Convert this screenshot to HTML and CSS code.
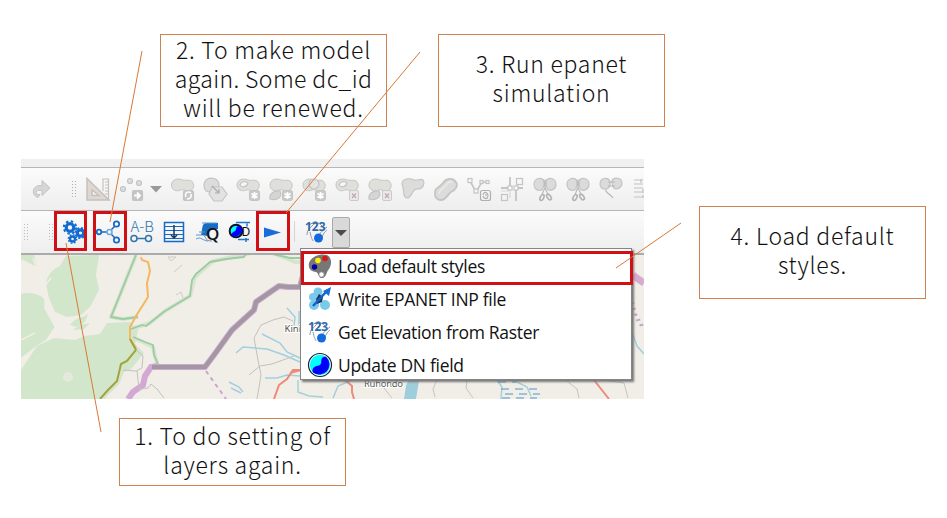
FILE: index.html
```html
<!DOCTYPE html>
<html lang="en">
<head>
<meta charset="utf-8">
<title>Toolbar guide</title>
<link rel="stylesheet" href="styles.css">
</head>
<body>
<main class="slide">
  <section class="app">
    <div class="strip"></div>
    <div class="toolbar editing">
      <svg class="glyphs" viewBox="21 168 623 42" fill="none" stroke="#c4c4c4" stroke-width="1.2">
        <defs>
          <g id="blob" fill="#dfdfdc" stroke="#c6c6c3" stroke-width="1"><path d="M1 6C1 0 8-1 12 1c4 1 8-1 10 2 3 4 0 9-4 9-4 0-5-2-8-1-4 2-9 0-9-5z"/></g>
          <g id="badge"><rect x="0" y="0" width="10" height="10" rx="2" fill="#c9c9c6" stroke="#c3c3c0" stroke-width="1"/></g>
          <g id="star"><use href="#badge"/><path d="M5 1.500v7M2 3l6 4M8 3L2 7" stroke="#fff" stroke-width="1.600"/></g>
          <g id="cross"><rect width="9" height="10" rx="1.500" fill="#eee6e8" stroke="#cfc8ca" stroke-width="1"/><path d="M2.500 3l4 4.500M6.500 3l-4 4.500" stroke="#b4b0b1" stroke-width="1.200"/></g>
          <g id="snip"><path d="M0 6C0-1 9-2 10 3c0 4-1 9-4 9S0 10 0 6zM12 3c1-5 10-4 10 3 0 5-6 7-8 5-2-2-2-5-2-8z" fill="#dadcdc"/><path d="M10 1l1 8 3 7M12 1l-1 8-3 7" stroke="#bbb"/><ellipse cx="8" cy="19" rx="1.700" ry="3.200" transform="rotate(28 8 19)" stroke="#b2b2b2" stroke-width="1.600"/><ellipse cx="15" cy="18.500" rx="1.700" ry="3.200" transform="rotate(-35 15 18.500)" stroke="#b2b2b2" stroke-width="1.600"/></g>
        </defs>
        <path d="M38 197.500c-7-2-6-12 2-12h2v-5l8 7.500-8 7.500v-5c-5-1-7 1-5 4h3z" fill="#d6d6d6" stroke="#c4c4c4" stroke-width="1"/>
        <path d="M72.500 181v16M75.500 181v16" stroke="#b0b0b0" stroke-width="1" stroke-dasharray="1 2"/>
        <path d="M87 178.500V200h22zM92 190v5.500h7z" fill="#ddd8d3" fill-rule="evenodd" stroke="#c6c0bb" stroke-width="1.500"/>
        <path d="M102.500 179h6v20.500" stroke="#c6c0bb"/><path d="M103 179v12M108 182h-3m3 3h-3m3 3h-3m3 3h-3m3 3h-3"/>
        <g fill="#ddd"><circle cx="123" cy="189" r="2.500"/><circle cx="130" cy="181" r="2.500"/><circle cx="139" cy="183" r="2.500"/></g>
        <rect x="132.500" y="190.500" width="10" height="10" rx="1.500" fill="#c5c5c5"/><path d="M134 195.500h6m-3-3l3 3-3 3" stroke="#fff" stroke-width="1.800"/>
        <path d="M150 186h12l-6 6.500z" fill="#999" stroke="none"/>
        <use href="#blob" x="170.500" y="179"/><rect x="183.500" y="190.500" width="10" height="10" rx="2" fill="#c8c8c8"/><path d="M186 197c-2-5 3-6 5-4M191 194c1 4-2 5-4 5" stroke="#fff" stroke-width="1.500"/>
        <path d="M204 185c0-9 14-9 15-1 0 6-5 9-9 8-4 0-6-3-6-7z" fill="#dcdcdc"/><path d="M212 187h10l5 7-5 7h-8l-5-7z" fill="#e2e2e2"/><path d="M212 186l7 7m0-4v4h-4" stroke="#aaa"/>
        <use href="#blob" x="236" y="179"/><path d="M240 185c1-4 6-4 8-2-1 4-6 5-8 2z" fill="#f7f7f7"/><use href="#star" x="249.500" y="190.500"/>
        <use href="#blob" x="269" y="179"/><path d="M270 199c-1-5 4-9 10-8 3 6-3 10-10 8z" fill="#d5d5d3"/><use href="#star" x="282.500" y="190.500"/>
        <use href="#blob" x="302" y="179"/><circle cx="314" cy="184" r="5" fill="#e4e4e1"/><use href="#star" x="315.500" y="190.500"/>
        <use href="#blob" x="335" y="179"/><path d="M339 185c1-4 6-4 8-2-1 4-6 5-8 2z" fill="#f7f7f7"/><use href="#cross" x="349.500" y="190.500"/>
        <use href="#blob" x="368" y="179"/><path d="M369 199c-1-5 4-9 10-8 3 6-3 10-10 8z" fill="#d5d5d3"/><use href="#cross" x="382.500" y="190.500"/>
        <path d="M402 184c0-6 8-6 12-4 4 1 6-2 9 0 2 3 0 9-5 9-6-1-6 9-11 9-5-1-2-8-5-14z" fill="#dcdcda"/>
        <path d="M435 194c-1-6 4-6 8-11 3-5 10-5 12-2 4 4 1 9-4 11-3 2-5 8-10 8-4 0-6-3-6-6z" fill="#dcdcda" stroke-width="1.800"/><path d="M439 194c0-5 4-4 8-10 2-3 4-3 5-1" stroke="#efefea"/>
        <path d="M470 181l6 11 6-10h6" stroke-width="1.600"/><g fill="#f7f7f7"><rect x="468" y="178.500" width="4" height="4"/><rect x="474" y="189" width="4" height="4"/><rect x="480" y="180.500" width="3" height="3"/><rect x="486" y="180.500" width="3" height="3"/></g><rect x="480.500" y="190.500" width="10" height="10" rx="2" stroke="#b0b0b0"/><path d="M483 195c1-4 4-3 5 0h-3m3 1c-1 4-4 3-5 0" stroke="#b0b0b0"/>
        <path d="M510 177v10M516 190v11M501 188h8M516 188h7" stroke-width="1.800"/><path d="M510 190v8M501 191h8" stroke="#d8d8d8"/><rect x="516.500" y="178.500" width="6" height="6"/><rect x="501.500" y="194.500" width="6" height="6"/><g fill="#fff"><rect x="508" y="186" width="4" height="4"/><rect x="514" y="186" width="4" height="4"/></g>
        <use href="#snip" x="534" y="178.500"/><use href="#snip" x="567" y="178.500"/>
        <path d="M600 184c0-7 9-7 10-2 1 5-3 8-6 7-2 0-4-2-4-5zM612 181c1-4 10-4 10 2 0 5-6 7-8 5-2-2-2-4-2-7z" fill="#dadcdc"/><path d="M608 182h7m-7 4h7M606 190c-1 3 4 3 7 8" stroke="#b5b5b5"/>
        <path d="M634 180h9m-9 4h9m-9 4h9m-9 4h9m-9 5h9M641 179v4m2 6v4m0 2v3" stroke="#c1c1c1"/>
      </svg>
    </div>
    <div class="toolbar epanet">
      <svg class="glyphs" viewBox="21 211 623 42" fill="none" stroke="#1769c5" stroke-width="1.500">
        <g stroke="#bcbcbc" stroke-width="1" stroke-dasharray="1 2"><path d="M24.500 224v17M27.500 224v17M49.500 224v17M52.500 224v17"/></g>
        <g stroke="#126bd0"><g stroke-width="3.200"><circle cx="70" cy="227.500" r="3.800"/><circle cx="80.500" cy="233" r="3.200"/></g><circle cx="72.500" cy="239" r="2.500" stroke-width="2.400"/><circle cx="70" cy="227.500" r="6.200" stroke-width="2" stroke-dasharray="2.430 2.440"/><circle cx="80.500" cy="233" r="5.200" stroke-width="1.600" stroke-dasharray="2.040 2.040"/><circle cx="72.500" cy="239" r="4.200" stroke-width="1.400" stroke-dasharray="1.650 1.650"/></g>
        <path d="M101 232h6M111 230l4-4M111 234l4 4"/><g stroke-width="1.700"><circle cx="99" cy="232" r="2.300"/><circle cx="109.500" cy="232" r="2.500" stroke="#70acd9"/><circle cx="116.500" cy="224" r="2.700"/><circle cx="116.500" cy="240" r="2.700"/></g>
        <text class="ab" x="130.500" y="232">A-B</text><path d="M137 238.500h9" stroke="#2d75ae"/><g stroke="#2d75ae"><circle cx="134" cy="238.500" r="3"/><circle cx="148.500" cy="238.500" r="3"/></g>
        <path d="M164.500 222.500h19v19h-19z"/><path d="M165 226.500h18m-18 4h18m-18 4h18m-18 4h18" stroke-width="1"/><path d="M174 225v13m-3-3l3 3 3-3" stroke="#173b60"/>
        <path d="M201 235c2-6 0-12 6-12h11v6h-8c-2 0 0 4-3 7z" fill="#176cc5" stroke="none"/><path d="M202 223h15M196 235h6M199 232h6M204 236c3 1 0 5 8 5M196 239c5-3 7 2 12 2" stroke="#6196c9" stroke-width="1"/><text class="q" x="206" y="240">Q</text>
        <path d="M236 222.500h14m-3 1v3M238 239.500h11M246 238v4" stroke="#1e79c9"/><circle cx="236" cy="231" r="6.300" fill="#0ff" stroke="#071220" stroke-width="2"/><path d="M239 226c-4 0-2 4-4 5-3 1-4 3-3 5 5 2 10-2 10-6 0-2-1-4-3-4z" fill="#00f" stroke="none"/><text class="d" x="241.500" y="236">D</text>
        <path d="M264 227.500l17 5-17 5z" fill="#176cda" stroke="none"/>
        <path d="M294.500 221v21" stroke="#d4d4d4" stroke-width="1"/>
        <g id="elevation"><path d="M307 235c0-5 3-7 5-9 4-5 8-3 10 0M309 225l5-3c3-2 5 2 1 5M310 232c1 5 2 7 3 9M318 236c4-5 5-6 9-9M322 237c2-5 4-6 5-7" stroke="#8894a1" stroke-width="1"/><text class="number" x="305" y="231">123</text><circle cx="318.500" cy="238" r="4.500" fill="#126bdd" stroke="none"/></g>
      </svg>
      <button class="drop" aria-label="Show menu"><span></span></button>
    </div>
    <div class="map">
      <svg viewBox="21 255 623 144" fill="none">
        <g fill="#d1e6ca"><path d="M46 284c1-9 7-15 14-18l6-10 33-1-3 20 3 15-9 17-9 8-14 2-12-5-6-14z"/><path d="M21 294c7-2 17-1 22 4 4 4-2 10 4 14l8 14-9 14-7 4-18 14zM21 255h13l3 12-4-2-12-6z"/><path d="M21 370l16-24 17-8 21 2 10-4 15-2 7-11 23-1 8 8-3 14 9 9-13 16-7 3-5 12-10 10-8 9H21z"/><path d="M70 325c8-10 15-6 19-13l-4 10-9 5zm3 5l7-5 10-2-6 6z"/></g>
        <g stroke="#f1eee8" stroke-width="1.500"><path d="M21 276l11-6 7 8 5 9 7-9M33 258l5 13 9-12M47 312l9 16 12 11M21 340l14-7"/></g>
        <circle cx="68" cy="377" r="5" fill="#e3eadb"/>
        <g stroke="#d8e4cf" stroke-width="4" stroke-linejoin="round"><path d="M136 255l-25 62 12 2 15-2m-7 12l19-6 15-12 25-15 5-19 18-16 20-4 18-4 22 0 22 9h22M131 337l12 5 10 5 4 17"/></g>
        <g stroke="#9bcca2" stroke-width="1.800" stroke-linejoin="round"><path d="M136 255l-25 62 12 2 15-2m-7 12l11-4 4 1 10-8 9-7 25-15 2-16 4-6 14-12 16-3 18-2 3-5 21 1 22 5h22M133 337l12 5 8 3 1 10 4 9-4 4"/></g>
        <path d="M141 257l1 3 6 2 2 9-3 12 1 14-12 19-6 11v12l6 9" stroke="#f3b861" stroke-width="2"/><path d="M130 339l6 11-9 11-6 3-4 17-9 9-8 9" stroke="#a3a43c" stroke-width="2"/>
        <path d="M128 399l5-7 10-7 2-9 6-9 6-1" stroke="#d4a8d5" stroke-width="6"/><path d="M152 367h53l9-12 18-25 22-20 2-8 10-7 13-9 9 1 12 0 6-23" stroke="#cba8cd" stroke-width="6" stroke-linejoin="round"/><path d="M152 367h53l9-12 18-25 22-20 2-8 10-7 13-9 9 1 12 0 6-23" stroke="#a297a3" stroke-width="4.200" stroke-linejoin="round"/>
        <path d="M206 371l20 28" stroke="#cba1ce" stroke-width="2" stroke-dasharray="4 4"/>
        <g stroke="#c2c1bf"><path d="M136 350l7 6-1 12-6 3-13-1m14 1l2 18 9-1 3-4 6 5 7 9M257 399l4-24-3-15-4-22 7-13 12-5 11-3 9 4m-44 54l11-9 12-2 22-8"/></g>
        <g stroke="#a0cfdf" stroke-width="1.500"><path d="M236 353l7-6 24 2 17 6 16 7M262 334l18 9 7 9 13 6M287 308l8 9-1 9m5-15v20M265 378h12l10-3 13 1M229 382l10 5 4 5m-12-4l10 5"/></g>
        <path d="M274 399l5-14 8-6 6-9h8" stroke="#ee8877" stroke-width="2"/>
        <path d="M408 381h11l-3 18h-12l2-13z" fill="#9fcedb"/>
        <g stroke="#a5d0da" stroke-width="1.500"><path d="M298 380v12l11 4 14 1M350 381l-12 5-5 12M497 380l5 7-1 12M515 381l12 6 4 9M633 335l4 11 7 8"/></g>
        <g stroke="#4e93cf" stroke-width="1.200" stroke-dasharray="8 6"><path d="M498 382h18m-15 7h41m-37 5h35m-38 4h35"/></g>
        <g stroke="#eb8c7e" stroke-width="2"><path d="M290 373l11-3M345 380l7 6v6l2 7M594 380l15 19"/></g><g stroke="#c5c3c5"><path d="M380 381l4 7 8 10M437 380l-4 9 2 8M467 380l-1 8 7 10M567 381l10 8 2 9M604 380l20 3 4 15"/></g>
        <path d="M633 275l5 4 6 4" stroke="#d7abd0" stroke-width="7"/><path d="M633 302l3 12 8 14M633 308l5 15 6 5" stroke="#c7a0ca" stroke-width="2" stroke-dasharray="2 4"/>
        <g stroke="#ccc"><path d="M168 257l3 4 5-4zm6 15l8-7m-6 30l5-3 2 6"/></g>
        <text class="place" x="284.500" y="332">Kini</text><text class="place" x="364" y="387" textLength="39">Ruhondo</text>
      </svg>
    </div>
  </section>

  <nav class="menu">
    <div class="item"><svg viewBox="0 0 26 26"><path d="M2 10C4 3 14 0 20 2c5 2 5 10 2 14-3 3-2 7-6 9-5 1-4-5-7-6C4 18 1 16 2 10z" fill="#777"/><circle cx="11" cy="7.500" r="2.800" fill="#fe0"/><circle cx="18" cy="5.500" r="2.800" fill="#d81818"/><circle cx="7.500" cy="14" r="2.700" fill="#00a"/><circle cx="14.500" cy="21.500" r="2.500" fill="#fff" stroke="#999" stroke-width=".7"/></svg><span>Load default styles</span></div>
    <div class="item"><svg viewBox="0 0 26 26"><g fill="#79cae8"><circle cx="11" cy="6" r="4.500"/><circle cx="6" cy="11" r="4"/><circle cx="7" cy="19" r="5"/><circle cx="18" cy="19" r="5"/></g><path d="M12 8l4 3-1 5-5 2-1-5z" fill="#173a61"/><path d="M6 20L19 6" stroke="#125fd0" stroke-width="2.500"/><path d="M24 1l-2 9-6-5z" fill="#176cda"/></svg><span>Write EPANET INP file</span></div>
    <div class="item"><svg viewBox="304 219 26 26" fill="none"><use href="#elevation"/></svg><span>Get Elevation from Raster</span></div>
    <div class="item"><svg viewBox="0 0 26 26"><circle cx="13" cy="13" r="11.500" fill="#fff" stroke="#102235" stroke-width="1.200"/><circle cx="13" cy="13" r="10.200" fill="#0ff"/><path d="M19 4.800c-8 0-2 7-7 8.700-4 .5-8 3-6 7A10.200 10.200 0 0 0 19 4.800z" fill="#00f"/></svg><span>Update DN field</span></div>
  </nav>

  <i class="mark gears"></i><i class="mark model"></i><i class="mark run"></i><i class="mark style"></i>
  <svg class="leaders" viewBox="0 0 947 518"><path d="M142 51L110 222M420 52L286 213M681 223L616 268M66 243L101 432"/></svg>
  <p class="callout remake"><span>2. To make model</span><span class="tight">again. Some dc_id</span><span>will be renewed.</span></p>
  <p class="callout simulate"><span>3. Run epanet</span><span>simulation</span></p>
  <p class="callout load"><span>4. Load default</span><span>styles.</span></p>
  <p class="callout setting"><span>1. To do setting of</span><span>layers again.</span></p>
</main>
</body>
</html>
```
FILE: styles.css
```css
* { box-sizing: border-box; }
body { margin: 0; background: #fff; }
.slide { position: relative; width: 947px; height: 518px; padding: 159px 0 0 21px; overflow: hidden; }
.app { width: 623px; height: 240px; display: flex; flex-direction: column; }
.strip { height: 9px; background: #f0f0f0; border-bottom: 1px solid #b7b7b7; }
.toolbar { position: relative; height: 43px; background: linear-gradient(#fbfbfb, #eee); border-bottom: 1px solid #b5b5b5; }
.epanet { height: 44px; border-bottom: 2px solid #aaa; }
.glyphs { display: block; width: 623px; height: 42px; }
.drop { position: absolute; left: 311px; top: 6px; width: 18px; height: 31px; padding: 0; border: 1px solid #aaa; border-radius: 2px; background: #d9d9d9; display: grid; place-items: center; }
.drop span { border: 6px solid transparent; border-top-color: #4c4c4c; border-bottom: 0; }
.map { height: 144px; background: #f1eee8; overflow: hidden; }
.map svg { display: block; width: 623px; height: 144px; }
.ab { font: 300 15px "Noto Sans CJK JP", sans-serif; fill: #2d75ae; stroke: none; }
.q { font: 600 17px "Open Sans", sans-serif; fill: #101419; stroke: none; }
.d { font: 12px "Noto Sans", sans-serif; fill: #111; stroke: none; }
.number { font: bold 12px "Noto Sans", sans-serif; fill: #2f69ad; stroke: none; }
.place { font: 9.5px "Noto Sans", sans-serif; fill: #555; stroke: #fff; stroke-width: 2px; paint-order: stroke; }
.menu { position: absolute; left: 300px; top: 248px; width: 332px; height: 132px; background: #fff; border: 1px solid #858585; box-shadow: 2px 2px 2px #777; padding-left: 6px; font: 17.5px/26px "Open Sans", sans-serif; color: #111; }
.item { display: flex; align-items: center; height: 33px; gap: 5px; white-space: nowrap; letter-spacing: -.3px; }
.item svg { width: 26px; height: 26px; flex: none; }
.mark { position: absolute; border: 3px solid #d01014; }
.gears { left: 54px; top: 211px; width: 33px; height: 40px; }
.model { left: 93px; top: 211px; width: 34px; height: 40px; }
.run { left: 256px; top: 211px; width: 34px; height: 40px; }
.style { left: 301px; top: 251px; width: 332px; height: 34px; }
.leaders { position: absolute; inset: 0; width: 947px; height: 518px; fill: none; stroke: #d87936; stroke-width: 1; }
.callout { position: absolute; margin: 0; padding-bottom: 5px; border: 1px solid #ce8250; width: 227px; height: 93px; display: flex; flex-direction: column; justify-content: center; align-items: center; font: 300 23px/29px "Noto Sans CJK JP", sans-serif; letter-spacing: .75px; color: #111; white-space: nowrap; }
.callout .tight { letter-spacing: .4px; }
.remake { left: 160px; top: 34px; }
.simulate { left: 438px; top: 34px; }
.load { left: 699px; top: 206px; }
.setting { left: 119px; top: 418px; height: 68px; }
```
